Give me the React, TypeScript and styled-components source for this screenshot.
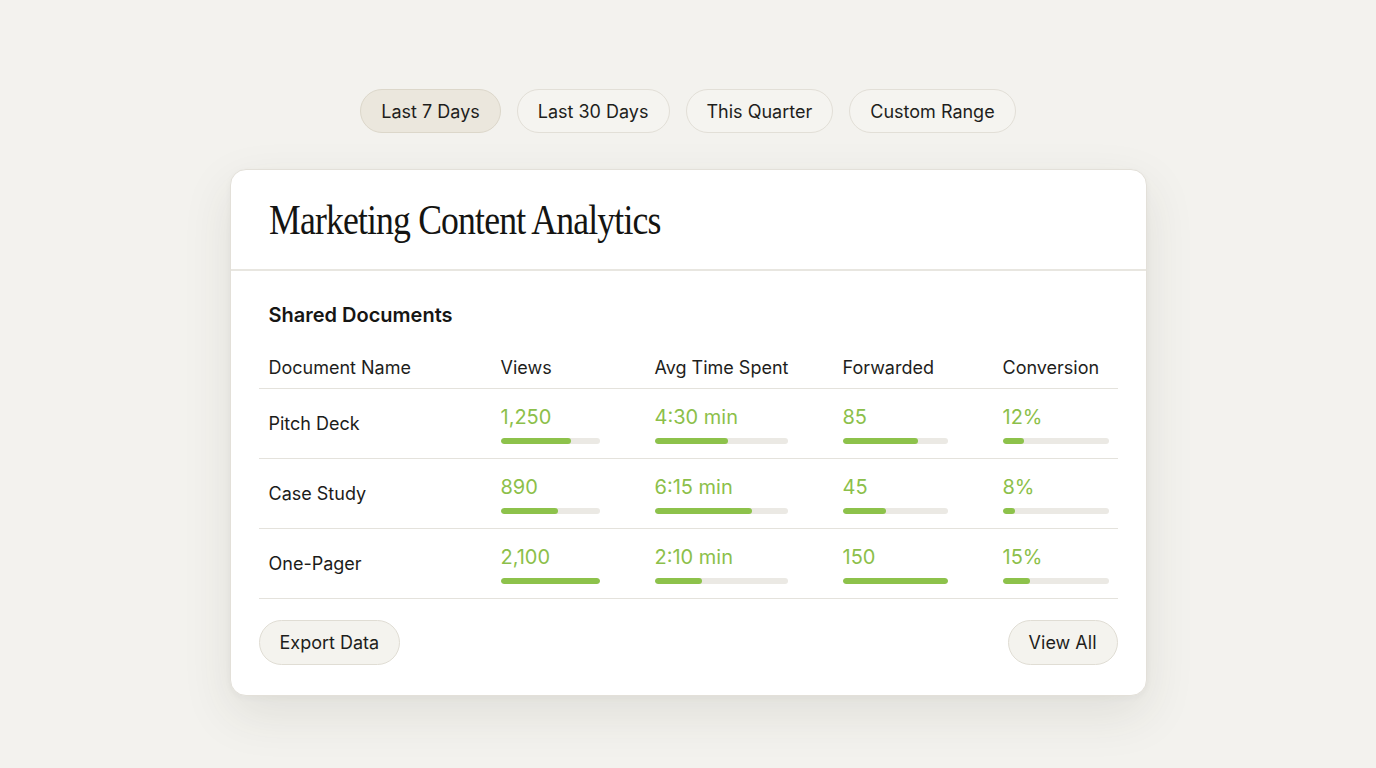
import React from 'react';
import styled, { createGlobalStyle } from 'styled-components';

const GlobalStyle = createGlobalStyle`
  html, body {
    margin: 0;
    padding: 0;
    background: #f3f2ee;
    font-family: Inter, "Noto Sans", sans-serif;
    color: #1c1c1a;
  }
`;

type Row = {
  name: string;
  views: [string, number];
  time: [string, number];
  forwarded: [string, number];
  conversion: [string, number];
};

const rows: Row[] = [
  { name: 'Pitch Deck', views: ['1,250', 0.71], time: ['4:30 min', 0.55], forwarded: ['85', 0.72], conversion: ['12%', 0.2] },
  { name: 'Case Study', views: ['890', 0.58], time: ['6:15 min', 0.73], forwarded: ['45', 0.41], conversion: ['8%', 0.12] },
  { name: 'One-Pager', views: ['2,100', 1], time: ['2:10 min', 0.36], forwarded: ['150', 1], conversion: ['15%', 0.26] },
];

const ranges = ['Last 7 Days', 'Last 30 Days', 'This Quarter', 'Custom Range'];

const Page = styled.div`
  min-height: 768px;
  display: flex;
  flex-direction: column;
  align-items: center;
  padding-top: 89px;
  box-sizing: border-box;
`;

const Filters = styled.div`
  display: flex;
  gap: 16px;
`;

const Pill = styled.button<{ $active?: boolean }>`
  height: 44px;
  padding: 0 20px;
  border-radius: 22px;
  border: 1px solid ${p => (p.$active ? '#dcd7ca' : '#e2dfd7')};
  background: ${p => (p.$active ? '#ebe7dd' : '#f5f4f0')};
  font-family: Inter, sans-serif;
  font-size: 18px;
  color: #1e1e1c;
  cursor: pointer;
`;

const Card = styled.section`
  margin-top: 36px;
  width: 917px;
  background: #fff;
  border: 1px solid #e3e0d9;
  border-radius: 16px;
  box-shadow: 0 18px 50px rgba(60, 55, 40, 0.1), 0 2px 6px rgba(60, 55, 40, 0.04);
  box-sizing: border-box;
`;

const CardHeader = styled.header`
  height: 101px;
  display: flex;
  align-items: center;
  padding: 0 38px;
  border-bottom: 2px solid #e8e6e0;
  box-sizing: border-box;
`;

const Title = styled.h1`
  margin: 0;
  font-family: "Liberation Serif", "DejaVu Serif", serif;
  font-weight: 400;
  font-size: 42px;
  letter-spacing: -1px;
  transform: scaleX(0.85);
  transform-origin: left center;
  color: #141412;
  white-space: nowrap;
`;

const CardBody = styled.div`
  padding: 32px 28px 30px;
`;

const SectionTitle = styled.h2`
  margin: 0 0 30px 10px;
  font-size: 20px;
  font-weight: 600;
  color: #161614;
`;

const Table = styled.table`
  width: 100%;
  border-collapse: collapse;
  table-layout: fixed;
`;

const Th = styled.th<{ $w: number }>`
  width: ${p => p.$w - 10}px;
  text-align: left;
  font-weight: 400;
  font-size: 18px;
  padding: 0 0 10px 10px;
  border-bottom: 1px solid #e4e2dc;
  color: #1e1e1c;
`;

const Td = styled.td`
  padding: 0 0 0 10px;
  height: 69px;
  border-bottom: 1px solid #e4e2dc;
  font-size: 18px;
  vertical-align: middle;
`;

const Metric = styled.div`
  display: flex;
  flex-direction: column;
  gap: 9px;
  margin-top: 1px;
`;

const Value = styled.span`
  color: #8cbf4a;
  font-size: 20px;
  line-height: 24px;
`;

const Track = styled.div<{ $w: number }>`
  width: ${p => p.$w}px;
  height: 6px;
  border-radius: 3px;
  background: #ebe9e4;
  overflow: hidden;
`;

const Fill = styled.div`
  height: 100%;
  border-radius: 3px;
  background: #8dc24b;
`;

const Footer = styled.div`
  display: flex;
  justify-content: space-between;
  margin-top: 21px;
`;

const GhostButton = styled.button`
  height: 45px;
  padding: 0 20px;
  border-radius: 23px;
  border: 1px solid #e0ddd4;
  background: #f4f3ee;
  font-family: Inter, sans-serif;
  font-size: 18px;
  color: #1e1e1c;
  cursor: pointer;
`;

const Bar = ({ label, pct, w }: { label: string; pct: number; w: number }) => (
  <Metric>
    <Value>{label}</Value>
    <Track $w={w}>
      <Fill style={{ width: `${pct * 100}%` }} />
    </Track>
  </Metric>
);

export default function App() {
  return (
    <>
      <GlobalStyle />
      <Page>
        <Filters>
          {ranges.map((r, i) => (
            <Pill key={r} $active={i === 0}>{r}</Pill>
          ))}
        </Filters>
        <Card>
          <CardHeader>
            <Title>Marketing Content Analytics</Title>
          </CardHeader>
          <CardBody>
            <SectionTitle>Shared Documents</SectionTitle>
            <Table>
              <thead>
                <tr>
                  <Th $w={232}>Document Name</Th>
                  <Th $w={154}>Views</Th>
                  <Th $w={188}>Avg Time Spent</Th>
                  <Th $w={160}>Forwarded</Th>
                  <Th $w={125}>Conversion</Th>
                </tr>
              </thead>
              <tbody>
                {rows.map(r => (
                  <tr key={r.name}>
                    <Td>{r.name}</Td>
                    <Td><Bar label={r.views[0]} pct={r.views[1]} w={99} /></Td>
                    <Td><Bar label={r.time[0]} pct={r.time[1]} w={133} /></Td>
                    <Td><Bar label={r.forwarded[0]} pct={r.forwarded[1]} w={105} /></Td>
                    <Td><Bar label={r.conversion[0]} pct={r.conversion[1]} w={106} /></Td>
                  </tr>
                ))}
              </tbody>
            </Table>
            <Footer>
              <GhostButton>Export Data</GhostButton>
              <GhostButton>View All</GhostButton>
            </Footer>
          </CardBody>
        </Card>
      </Page>
    </>
  );
}
